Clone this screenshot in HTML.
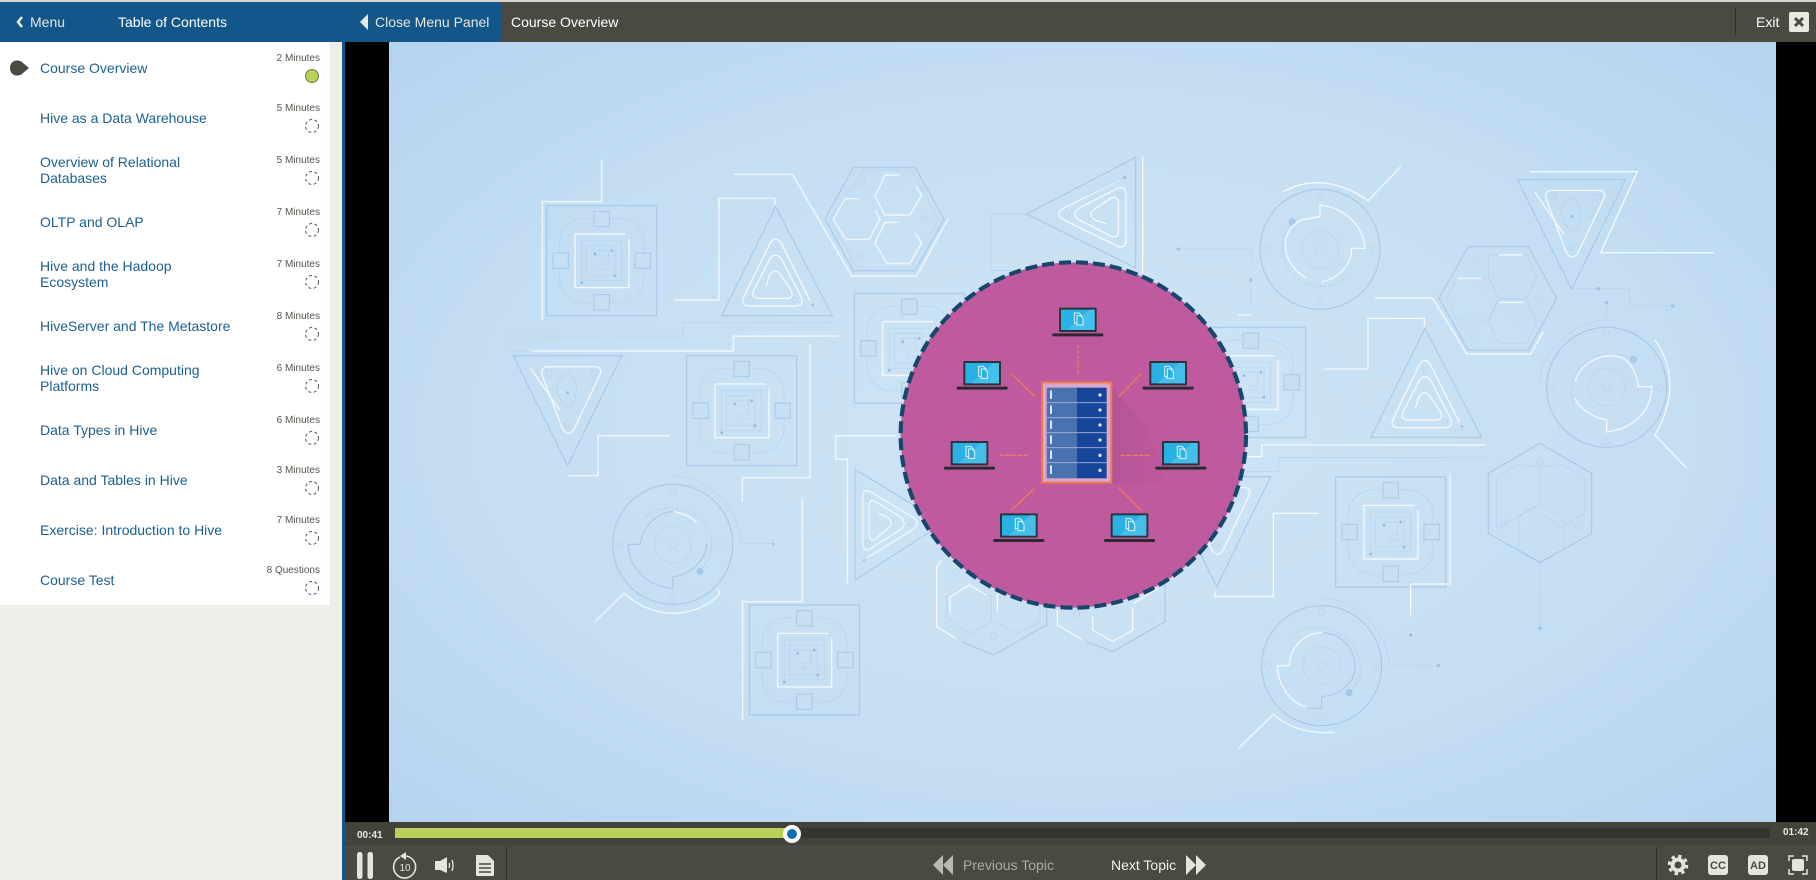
<!DOCTYPE html>
<html><head><meta charset="utf-8"><style>
html,body{margin:0;padding:0;width:1816px;height:880px;overflow:hidden;background:#4a4a42}
svg{display:block}
text{font-family:"Liberation Sans",Arial,sans-serif}
.t{font-size:14px;fill:#1b5f92}
.m{font-size:10px;fill:#55554e;text-anchor:end}
.w{fill:none;stroke:#f6fbff;stroke-width:3.8;stroke-linejoin:miter}
.b{fill:none;stroke:#a6c9e8;stroke-width:3.4}
.f{fill:none;stroke:#a9cceb;stroke-width:1.6;opacity:.85}
.o{stroke:#ef7c55;stroke-width:4;fill:none}
</style></head><body>
<svg xmlns="http://www.w3.org/2000/svg" width="1816" height="880" viewBox="0 0 1816 880">
<defs>
<radialGradient id="bg" cx="50%" cy="50%" r="72%"><stop offset="0" stop-color="#d0e5f6"/><stop offset=".6" stop-color="#c4def3"/><stop offset="1" stop-color="#b4d3ee"/></radialGradient>
<linearGradient id="sh" x1="0" y1="0" x2="1" y2="0"><stop offset="0" stop-color="#9c4a88" stop-opacity=".75"/><stop offset="1" stop-color="#9c4a88" stop-opacity="0"/></linearGradient>
<filter id="bl" x="-5%" y="-5%" width="110%" height="110%"><feGaussianBlur stdDeviation=".25"/></filter>
<g id="chip">
<rect class="b" x="-165" y="-165" width="330" height="330"/>
<rect class="f" x="-127" y="-127" width="254" height="254" rx="75"/>
<g class="b" style="stroke-width:3;fill:#c6dff3"><rect x="-23" y="-148" width="46" height="46"/><rect x="-23" y="102" width="46" height="46"/><rect x="-146" y="-23" width="46" height="46"/><rect x="100" y="-23" width="46" height="46"/></g>
<path class="w" d="M72,-80 H-80 V81 H82 V-65"/>
<path class="f" d="M-60,-60 H60 V60 H-60 Z M-45,-45 H40 V45 H-45 Z M-30,-30 H20 V10 H-5 V25 H25"/>
<circle cx="30" cy="-30" r="4" fill="#8fb7da"/><circle cx="-20" cy="-20" r="4" fill="#8fb7da"/><circle cx="40" cy="45" r="4" fill="#8fb7da"/><circle cx="-60" cy="66" r="4" fill="#8fb7da"/>
</g>
<g id="up">
<path class="b" d="M887,170 L1057,497 H725 Z"/>
<path class="w" d="M990,452 L903,278 Q887,255 871,278 L792,440 Q780,468 808,468 H945 Q975,468 963,440 L905,328 Q887,302 869,328 L822,420 Q810,445 838,445 H918 Q945,445 933,420 L900,372 Q885,352 868,377 L858,410"/>
<circle class="f" cx="887" cy="292" r="8"/><circle class="f" cx="812" cy="450" r="8"/><circle class="f" cx="945" cy="450" r="8"/>
<circle cx="998" cy="464" r="4" fill="#9cc1e2"/>
</g>
<g id="down">
<path class="b" d="M100,617 H425 L263,947 Z"/>
<path class="w" d="M152,655 L240,782"/>
<path class="w" d="M205,650 H345 Q370,650 358,678 L282,838 Q265,862 248,838 L188,680 Q178,650 205,650 Z"/>
<circle class="f" cx="208" cy="670" r="9"/><circle class="f" cx="340" cy="670" r="9"/><circle class="f" cx="263" cy="822" r="9"/>
<path class="f" d="M263,670 Q310,700 275,770 Q255,790 230,720 Q230,690 263,670"/><circle cx="263" cy="728" r="4" fill="#8fb7da"/>
</g>
<g id="gad">
<circle class="b" r="180"/>
<circle class="f" r="56" stroke-dasharray="30 5"/>
<circle class="f" r="13"/>
<circle class="f" cy="-162" r="9"/><circle class="f" cy="162" r="9"/><circle class="f" cx="-162" r="9"/><circle class="f" cx="162" r="9"/>
</g>
<g id="hx">
<path class="b" d="M685,290 H865 L950,445 L865,600 H685 L597,445 Z"/>
<path class="f" d="M745,315 H860 L890,380 L860,445 H775 L745,380 Z M620,445 L650,385 H745 L775,445 L745,510 H650 Z M775,450 H860 L890,515 L860,580 H775 L745,515 Z"/>
<circle class="f" cx="708" cy="335" r="9"/><circle class="f" cx="895" cy="445" r="9"/><circle class="f" cx="700" cy="558" r="9"/>
<path class="w" d="M775,315 H848 M653,385 H725 M775,457 H848"/>
</g>
<g id="lap">
<rect x="0" y="0" width="113" height="73" rx="3" fill="#2e333b"/>
<rect x="6" y="6" width="101" height="61" fill="#2cb1e3"/>
<path d="M25,67 L90,6 H107 V67 Z" fill="#4cc3ee" opacity=".75"/>
<path d="M46,16 H60 L68,24 V46 H46 Z" fill="#2cb1e3" stroke="#dff5fd" stroke-width="3"/>
<path d="M54,24 H64 L72,32 V52 H54 Z" fill="#2cb1e3" stroke="#dff5fd" stroke-width="3"/>
<rect x="-20" y="77" width="153" height="9" rx="3" fill="#2b2a33"/>
</g>
</defs>

<!-- page base -->
<rect width="1816" height="880" fill="#4a4a42"/>
<rect width="1816" height="2" fill="#d5d5d2"/>
<rect x="0" y="42" width="342" height="838" fill="#edeee8"/>
<path d="M0,42 H326 Q330,42 330,46 V605 H0 Z" fill="#fff"/>
<rect x="342" y="42" width="3" height="838" fill="#12568a"/>
<path d="M0,2 H497 Q501,2 501,6 V38 Q501,42 497,42 H0 Z" fill="#12568a"/>
<rect x="345" y="42" width="1471" height="780" fill="#000"/>

<!-- video -->
<rect x="389" y="42" width="1387" height="780" fill="url(#bg)"/>
<svg x="389" y="42" width="1387" height="780" viewBox="389 42 1387 780">
<g filter="url(#bl)">
<!-- left group -->
<g transform="translate(480,150) scale(.33333)">
<use href="#chip" transform="translate(365,332)"/>
<use href="#chip" transform="translate(785,782)"/>
<use href="#chip" transform="translate(1288,595)"/>
<use href="#chip" transform="translate(973,1530)"/>
<use href="#up"/>
<use href="#down"/>
<path class="b" d="M1120,52 H1305 L1392,207 L1305,362 H1120 L1035,207 Z"/>
<path class="f" d="M1150,60 H1295 L1375,207 L1295,352 H1130 L1050,207 Z"/>
<circle class="f" cx="1147" cy="96" r="9"/><circle class="f" cx="1333" cy="206" r="9"/><circle class="f" cx="1138" cy="319" r="9"/>
<path class="w" d="M1258,75 H1215 L1185,140 L1215,195 H1290 L1325,135 L1308,110"/>
<path class="w" d="M1138,146 H1095 L1060,208 L1097,268 H1167 L1200,208 L1185,180"/>
<path class="w" d="M1258,217 H1215 L1185,278 L1220,340 H1290 L1325,278 L1305,250"/>
<path class="w" d="M365,28 V155 H187 V512"/>
<path class="w" d="M760,73 H937 L1115,378 H1310 L1405,205"/>
<path class="w" d="M585,450 H717 V145 H885 V165"/>
<path class="w" d="M148,603 H760 V558 H1075"/>
<path class="f" d="M80,558 H610 V518 H1070"/>
<path class="f" d="M90,604 H160"/>
<path class="w" d="M262,977 H354 V857 H568"/>
<path class="w" d="M990,582 V983 H787 V1055"/>
<path class="w" d="M1250,857 H1067 V928 H1102 V1300"/>
<path class="w" d="M967,1047 V1355 H788 V1708"/>
<!-- right-pointing triangle -->
<use href="#up" transform="translate(1390,1120) rotate(90) scale(1,.81) translate(-887,-170)"/>
<!-- gadget C -->
<use href="#gad" transform="translate(578,1183)"/>
<path class="b" d="M445,1183 H480 C490,1120 540,1085 580,1085 M578,1315 V1280 C630,1275 680,1230 680,1180 M445,1183 C445,1260 510,1310 578,1315"/>
<path class="f" stroke-dasharray="6 6" style="stroke-width:3" d="M498,1100 C560,1045 690,1080 695,1180 C695,1215 680,1240 660,1262"/>
<circle cx="660" cy="1264" r="10" fill="#a6c9e8"/>
<path class="w" d="M582,1085 Q625,1092 650,1118"/>
<path class="w" d="M345,1415 L432,1330 Q500,1390 585,1390 Q670,1385 720,1330 L712,1317"/>
<path class="f" d="M580,978 C690,980 780,1080 782,1180 H880"/><circle cx="880" cy="1182" r="4" fill="#9cc1e2"/>
</g>
<!-- right group -->
<g transform="translate(1240,150) scale(.33333)">
<use href="#chip" transform="translate(32,697)"/>
<use href="#chip" transform="translate(452,1146)"/>
<use href="#up" transform="translate(-332,365)"/>
<use href="#down" transform="translate(732,-529)"/>
<use href="#down" transform="translate(-333,363)"/>
<use href="#hx"/>
<use href="#gad" transform="translate(240,298)"/>
<use href="#gad" transform="translate(1100,712)"/>
<use href="#gad" transform="translate(245,1547)"/>
<path class="f" stroke-dasharray="6 6" style="stroke-width:3" d="M150,225 C110,280 120,370 210,405 C260,420 310,395 325,375"/>
<circle cx="157" cy="216" r="11" fill="#a6c9e8"/>
<path class="w" d="M200,385 C120,340 115,240 185,210 L240,200 V165 C320,175 370,230 375,295 H335 C335,340 300,385 245,395"/>
<path class="w" d="M130,125 Q250,60 385,152 L482,50"/>
<path class="f" stroke-dasharray="6 6" style="stroke-width:3" d="M1000,760 C970,660 1060,580 1180,625"/>
<circle cx="1180" cy="628" r="11" fill="#a6c9e8"/>
<path class="w" d="M1005,695 C1020,640 1090,600 1150,625 C1190,650 1195,710 1195,710 H1235 C1235,790 1170,840 1100,845 V810 C1050,800 1015,770 1005,745"/>
<path class="w" d="M1245,570 Q1335,700 1245,855 L1340,955"/>
<path class="w" d="M-5,495 H35"/>
<path class="w" d="M870,65 H1192 L1082,308 H1422"/>
<path class="w" d="M405,444 H578 L680,612 H872 L910,545"/>
<path class="w" d="M253,657 H384 V505 H553 V530"/>
<path class="w" d="M20,920 H65 V885 H740"/>
<path class="f" d="M20,965 H115 V922 H740"/>
<path class="w" d="M630,970 V1302 H512 V1395"/>
<path class="w" d="M236,1090 H100 V1340 H-75 V1325"/>
<path class="f" d="M995,415 H1075 M1075,415 H1168 V467 H1298"/><circle cx="1075" cy="415" r="5" fill="#9cc1e2"/><circle cx="1298" cy="468" r="5" fill="#9cc1e2"/>
<path class="f" d="M1100,458 V510 C1000,510 900,610 897,700 H920"/><circle cx="1100" cy="458" r="5" fill="#9cc1e2"/>
<path class="f" d="M32,390 V470"/>
<circle cx="32" cy="390" r="5" fill="#9cc1e2"/>
<!-- hex bottom right -->
<path class="b" d="M900,880 L1055,970 V1150 L900,1238 L745,1150 V970 Z"/>
<path class="f" d="M900,950 V1060 L770,1135 V980 L835,945 Z M900,950 L965,945 L1035,985 V1090 L965,1130 L900,1090 M835,1100 L900,1065 L970,1100 V1200 L900,1235 L835,1200 Z"/>
<circle class="f" cx="900" cy="936" r="9"/><circle class="f" cx="790" cy="1122" r="9"/><circle class="f" cx="1015" cy="1130" r="9"/>
<path class="f" d="M900,1245 V1435"/><circle cx="900" cy="1435" r="5" fill="#9cc1e2"/>
<!-- gadget D -->
<path class="f" stroke-dasharray="6 6" style="stroke-width:3" d="M165,1450 C230,1410 350,1440 362,1550 C365,1590 345,1605 330,1625"/>
<circle cx="327" cy="1628" r="11" fill="#a6c9e8"/>
<path class="b" d="M245,1448 C310,1450 345,1500 345,1550 C345,1600 300,1635 245,1640 V1675 H200"/>
<path class="w" d="M198,1670 C140,1655 112,1590 112,1547 H148 C150,1490 190,1450 248,1448"/>
<path class="w" d="M-5,1795 L100,1693 Q170,1755 285,1747"/>
<path class="f" d="M250,1345 C350,1345 445,1450 448,1547 H595"/><circle cx="595" cy="1547" r="5" fill="#9cc1e2"/>
<circle cx="512" cy="1455" r="5" fill="#9cc1e2"/>
</g>
<!-- top-centre triangle -->
<g transform="translate(940,140) scale(.33333)">
<use href="#up" transform="translate(260,222) rotate(-90) translate(-887,-170)"/>
<path class="w" d="M608,48 V400"/>
<path class="f" d="M260,222 H153 V392 H270"/>
<path class="f" d="M715,327 H935 V360"/><circle cx="715" cy="327" r="5" fill="#9cc1e2"/>
<path class="f" d="M435,170 L555,112"/><circle cx="555" cy="112" r="5" fill="#9cc1e2"/>
</g>
<!-- bottom-centre hexes -->
<g transform="translate(920,560) scale(.33333)">
<path class="b" d="M125,245 L220,285 L380,195 V100"/>
<path class="w" d="M110,237 L50,200 V20 L65,0"/>
<path class="f" d="M80,170 V110 L148,75 L215,110 V185 L148,222 Z M225,185 L290,222 L360,185 V110"/>
<circle class="f" cx="108" cy="35" r="9"/><circle class="f" cx="220" cy="229" r="9"/>
<path class="w" d="M90,160 V110 L148,75 L200,105 M232,158 V105 L250,95"/>
<path class="b" d="M500,245 L578,275 L735,185 V70"/>
<path class="w" d="M485,238 L412,195 V150"/>
<path class="w" d="M518,170 V210 L578,245 L638,210 V145 M640,130 L715,85"/>
<circle class="f" cx="470" cy="162" r="9"/><circle class="f" cx="692" cy="170" r="9"/>
</g>
</g>
<!-- main circle -->
<g transform="translate(880,250) scale(.33333)" filter="url(#bl)">
<circle cx="580" cy="555" r="518" fill="#c05a9f"/>
<circle cx="580" cy="555" r="518" fill="none" stroke="#19476a" stroke-width="12.5" stroke-dasharray="36 15"/>
<path d="M695,410 L800,530 L870,700 L695,700 Z" fill="url(#sh)" opacity=".45"/>
<g class="o">
<path d="M594,285 V372" stroke-dasharray="12 3"/>
<path d="M393,370 L465,440"/><path d="M785,370 L716,440"/>
<path d="M358,616 H445" stroke-dasharray="14 4"/><path d="M722,616 H810" stroke-dasharray="14 4"/>
<path d="M393,782 L465,714"/><path d="M785,782 L716,714"/>
</g>
<rect x="486" y="397" width="208" height="301" fill="#dba8cc" stroke="#ef7748" stroke-width="6"/>
<rect x="500" y="413" width="91" height="272" fill="#4a72ae"/>
<rect x="591" y="413" width="89" height="272" fill="#17459b"/>
<g stroke="#a9b5d6" stroke-width="2.5"><path d="M500,458 H680 M500,503 H680 M500,548 H680 M500,593 H680 M500,638 H680"/></g>
<g fill="#dfe5f3">
<rect x="510" y="421" width="6" height="26" rx="2"/><rect x="510" y="466" width="6" height="26" rx="2"/><rect x="510" y="511" width="6" height="26" rx="2"/><rect x="510" y="556" width="6" height="26" rx="2"/><rect x="510" y="601" width="6" height="26" rx="2"/><rect x="510" y="646" width="6" height="26" rx="2"/>
<circle cx="660" cy="435" r="5"/><circle cx="660" cy="480" r="5"/><circle cx="660" cy="525" r="5"/><circle cx="660" cy="570" r="5"/><circle cx="660" cy="616" r="5"/><circle cx="660" cy="661" r="5"/>
</g>
<use href="#lap" x="537" y="173"/>
<use href="#lap" x="250" y="333"/>
<use href="#lap" x="808" y="333"/>
<use href="#lap" x="212" y="573"/>
<use href="#lap" x="846" y="573"/>
<use href="#lap" x="360" y="790"/>
<use href="#lap" x="692" y="790"/>
</g>
</svg>

<!-- header -->
<path d="M22,17 L18,22 L22,27" fill="none" stroke="#e8e9e1" stroke-width="2.6"/>
<text x="30" y="27" font-size="14" fill="#e4e6e0">Menu</text>
<text x="118" y="27" font-size="14" fill="#fff">Table of Contents</text>
<path d="M368,14 V30 L360,22 Z" fill="#e8e9e1"/>
<text x="375" y="27" font-size="14" fill="#e4e6e0">Close Menu Panel</text>
<text x="511" y="27" font-size="14" fill="#fff">Course Overview</text>
<rect x="1735" y="7" width="1" height="29" fill="#33332d"/>
<text x="1756" y="27" font-size="14" fill="#fff">Exit</text>
<rect x="1789" y="12" width="20" height="20" rx="2" fill="#e8e9e1"/>
<path d="M1795,18 L1803,26 M1803,18 L1795,26" stroke="#4a4a42" stroke-width="3"/>

<!-- sidebar -->
<path d="M10,68 C10,59 20,59 23,63 L29,68 L23,73 C20,77 10,77 10,68 Z" fill="#4a4a42"/>
<text class="t" x="40" y="73">Course Overview</text>
<text class="t" x="40" y="123">Hive as a Data Warehouse</text>
<text class="t" x="40" y="167">Overview of Relational</text>
<text class="t" x="40" y="183">Databases</text>
<text class="t" x="40" y="227">OLTP and OLAP</text>
<text class="t" x="40" y="271">Hive and the Hadoop</text>
<text class="t" x="40" y="287">Ecosystem</text>
<text class="t" x="40" y="331">HiveServer and The Metastore</text>
<text class="t" x="40" y="375">Hive on Cloud Computing</text>
<text class="t" x="40" y="391">Platforms</text>
<text class="t" x="40" y="435">Data Types in Hive</text>
<text class="t" x="40" y="485">Data and Tables in Hive</text>
<text class="t" x="40" y="535">Exercise: Introduction to Hive</text>
<text class="t" x="40" y="585">Course Test</text>
<text class="m" x="320" y="61">2 Minutes</text>
<text class="m" x="320" y="111">5 Minutes</text>
<text class="m" x="320" y="163">5 Minutes</text>
<text class="m" x="320" y="215">7 Minutes</text>
<text class="m" x="320" y="267">7 Minutes</text>
<text class="m" x="320" y="319">8 Minutes</text>
<text class="m" x="320" y="371">6 Minutes</text>
<text class="m" x="320" y="423">6 Minutes</text>
<text class="m" x="320" y="473">3 Minutes</text>
<text class="m" x="320" y="523">7 Minutes</text>
<text class="m" x="320" y="573">8 Questions</text>
<circle cx="312" cy="76" r="6.5" fill="#b9d15a" stroke="#6d7a3a" stroke-width="1"/>
<g fill="none" stroke="#555" stroke-width="1" stroke-dasharray="3 2.5">
<circle cx="312" cy="126" r="6.5"/><circle cx="312" cy="178" r="6.5"/><circle cx="312" cy="230" r="6.5"/><circle cx="312" cy="282" r="6.5"/><circle cx="312" cy="334" r="6.5"/><circle cx="312" cy="386" r="6.5"/><circle cx="312" cy="438" r="6.5"/><circle cx="312" cy="488" r="6.5"/><circle cx="312" cy="538" r="6.5"/><circle cx="312" cy="588" r="6.5"/>
</g>

<!-- controls -->
<rect x="345" y="822" width="1471" height="23" fill="#42433b"/>
<rect x="345" y="845" width="1471" height="35" fill="#4a4a42"/>
<rect x="395" y="828" width="1375" height="10" fill="#33362e"/>
<rect x="395" y="828" width="397" height="10" fill="#b9d15a"/>
<circle cx="792" cy="834" r="9" fill="#fff"/><circle cx="792" cy="834" r="5" fill="#0f6fb3"/>
<text x="357" y="838" font-size="10" font-weight="bold" fill="#e8e9e1">00:41</text>
<text x="1783" y="835" font-size="10" font-weight="bold" fill="#e8e9e1">01:42</text>
<rect x="357" y="852" width="5.5" height="27" rx="2.5" fill="#e4e5dd"/>
<rect x="367.5" y="852" width="5.5" height="27" rx="2.5" fill="#e4e5dd"/>
<path d="M400,857 A11,11 0 1 0 405,856" fill="none" stroke="#e4e5dd" stroke-width="1.6"/>
<path d="M406,852 L400,856 L406,860 Z" fill="#e4e5dd"/>
<text x="405" y="871" font-size="10" fill="#e4e5dd" text-anchor="middle">10</text>
<path d="M435,861 H440 L447,857 V873 L440,870 H435 Z" fill="#e4e5dd"/>
<path d="M449,863 Q450,865 449,868 M452,860 Q454,865 452,871" fill="none" stroke="#e4e5dd" stroke-width="1.4"/>
<path d="M476,855 H488 L494,861 V875 Q494,876 493,876 H477 Q476,876 476,875 Z" fill="#e4e5dd"/>
<path d="M479,864 H491 M479,868 H491 M479,872 H491" stroke="#4a4a42" stroke-width="1.4"/>
<rect x="506" y="847" width="1" height="33" fill="#33332d"/>
<rect x="1656" y="847" width="1" height="33" fill="#33332d"/>

<path d="M943,855 V875 L933,865 Z M953,855 V875 L943,865 Z" fill="#b6bcb0"/>
<text x="963" y="870" font-size="14" fill="#a9aea3" textLength="91">Previous Topic</text>
<text x="1111" y="870" font-size="14" fill="#f0f1ea">Next Topic</text>
<path d="M1186,855 V875 L1196,865 Z M1196,855 V875 L1206,865 Z" fill="#e4e5dd"/>

<circle cx="1678" cy="865" r="5.5" fill="none" stroke="#e4e5dd" stroke-width="4"/>
<circle cx="1678" cy="865" r="8.8" fill="none" stroke="#e4e5dd" stroke-width="3" stroke-dasharray="3.4 3.5"/>
<rect x="1708" y="855" width="20" height="20" rx="3" fill="#e4e5dd"/>
<text x="1718" y="869" font-size="11" font-weight="bold" fill="#4a4a42" text-anchor="middle">CC</text>
<rect x="1748" y="855" width="20" height="20" rx="3" fill="#e4e5dd"/>
<text x="1758" y="869" font-size="11" font-weight="bold" fill="#4a4a42" text-anchor="middle">AD</text>
<path d="M1789,861 V856 H1794 M1802,856 H1807 V861 M1807,869 V874 H1802 M1794,874 H1789 V869" fill="none" stroke="#e4e5dd" stroke-width="1.5"/>
<rect x="1792" y="859" width="12" height="12" rx="2" fill="#e4e5dd"/>
</svg>
</body></html>
